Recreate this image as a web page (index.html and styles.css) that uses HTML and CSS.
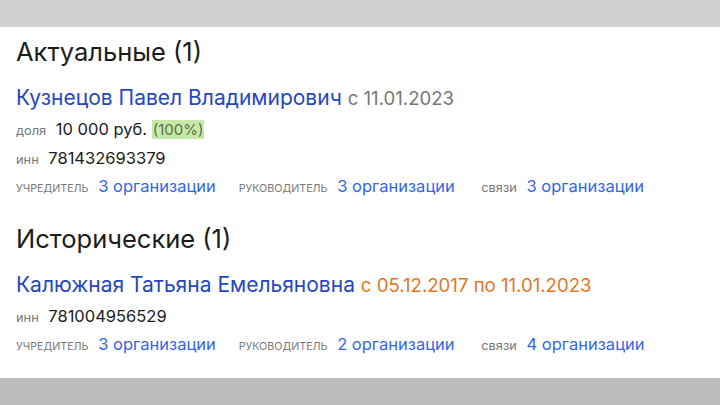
FILE: index.html
```html
<!DOCTYPE html>
<html lang="ru">
<head>
  <meta charset="UTF-8">
  <title>Участники</title>
  <link rel="stylesheet" href="styles.css">
</head>
<body>
  <div class="bar bar-top"></div>
  <div class="panel">
    <section class="group">
      <h2>Актуальные (1)</h2>
      <div class="person">
        <div class="name-line">
          <a class="name" href="#">Кузнецов Павел Владимирович</a>
          <span class="period">с 11.01.2023</span>
        </div>
        <div class="field"><span class="label">доля</span> <span class="value">10 000 руб.</span> <span class="share">(100%)</span></div>
        <div class="field"><span class="label">инн</span> <span class="value">781432693379</span></div>
        <div class="links">
          <div class="link-item"><span class="label caps">Учредитель</span> <a href="#">3 организации</a></div>
          <div class="link-item"><span class="label caps">Руководитель</span> <a href="#">3 организации</a></div>
          <div class="link-item"><span class="label">связи</span> <a href="#">3 организации</a></div>
        </div>
      </div>
    </section>
    <section class="group">
      <h2>Исторические (1)</h2>
      <div class="person">
        <div class="name-line">
          <a class="name" href="#">Калюжная Татьяна Емельяновна</a>
          <span class="period old">с 05.12.2017 по 11.01.2023</span>
        </div>
        <div class="field"><span class="label">инн</span> <span class="value">781004956529</span></div>
        <div class="links">
          <div class="link-item"><span class="label caps">Учредитель</span> <a href="#">3 организации</a></div>
          <div class="link-item"><span class="label caps">Руководитель</span> <a href="#">2 организации</a></div>
          <div class="link-item"><span class="label">связи</span> <a href="#">4 организации</a></div>
        </div>
      </div>
    </section>
  </div>
  <div class="bar bar-bottom"></div>
</body>
</html>
```

FILE: styles.css
```css
/* Page frame */
body {
  margin: 0;
  font-family: Inter, "Noto Sans", sans-serif;
  color: #222;
  background-color: #fff;
}

.bar {
  height: 27px;
}

.bar-top {
  background-color: #d0d0d0;
}

.bar-bottom {
  background-color: #bdbdbd;
}

.panel {
  height: 351px;
  box-sizing: border-box;
  padding: 10px 16px 0;
  background-color: #fff;
}

/* Groups */
h2 {
  margin: 0;
  font-size: 25.5px;
  font-weight: 400;
  line-height: 30px;
  color: #1c1c1c;
}

.group + .group {
  margin-top: 24px;
}

.person {
  margin-top: 18px;
}

.name-line {
  font-size: 21px;
  line-height: 26px;
}

.name {
  color: #2447c2;
  text-decoration: none;
}

.period {
  font-size: 18.6px;
  color: #777;
}

.period.old {
  color: #e4771f;
}

.field {
  margin-top: 7px;
  font-size: 16.5px;
  line-height: 22px;
}

.field + .field {
  margin-top: 5px;
}

.label {
  font-size: 12.8px;
  color: #777;
  margin-right: 5px;
}

.caps {
  text-transform: uppercase;
  font-size: 10.7px;
}

.value {
  color: #1c1c1c;
}

.share {
  font-size: 15px;
  background-color: #c8e8a8;
  color: #5a6e50;
  padding: 0 1px;
}

.links {
  display: flex;
  margin-top: 4px;
  font-size: 16.5px;
  line-height: 22px;
}

.link-item {
  width: 225px;
}

.link-item:nth-child(2) {
  width: 245px;
}

.links a {
  color: #3466e6;
  text-decoration: none;
}
```
